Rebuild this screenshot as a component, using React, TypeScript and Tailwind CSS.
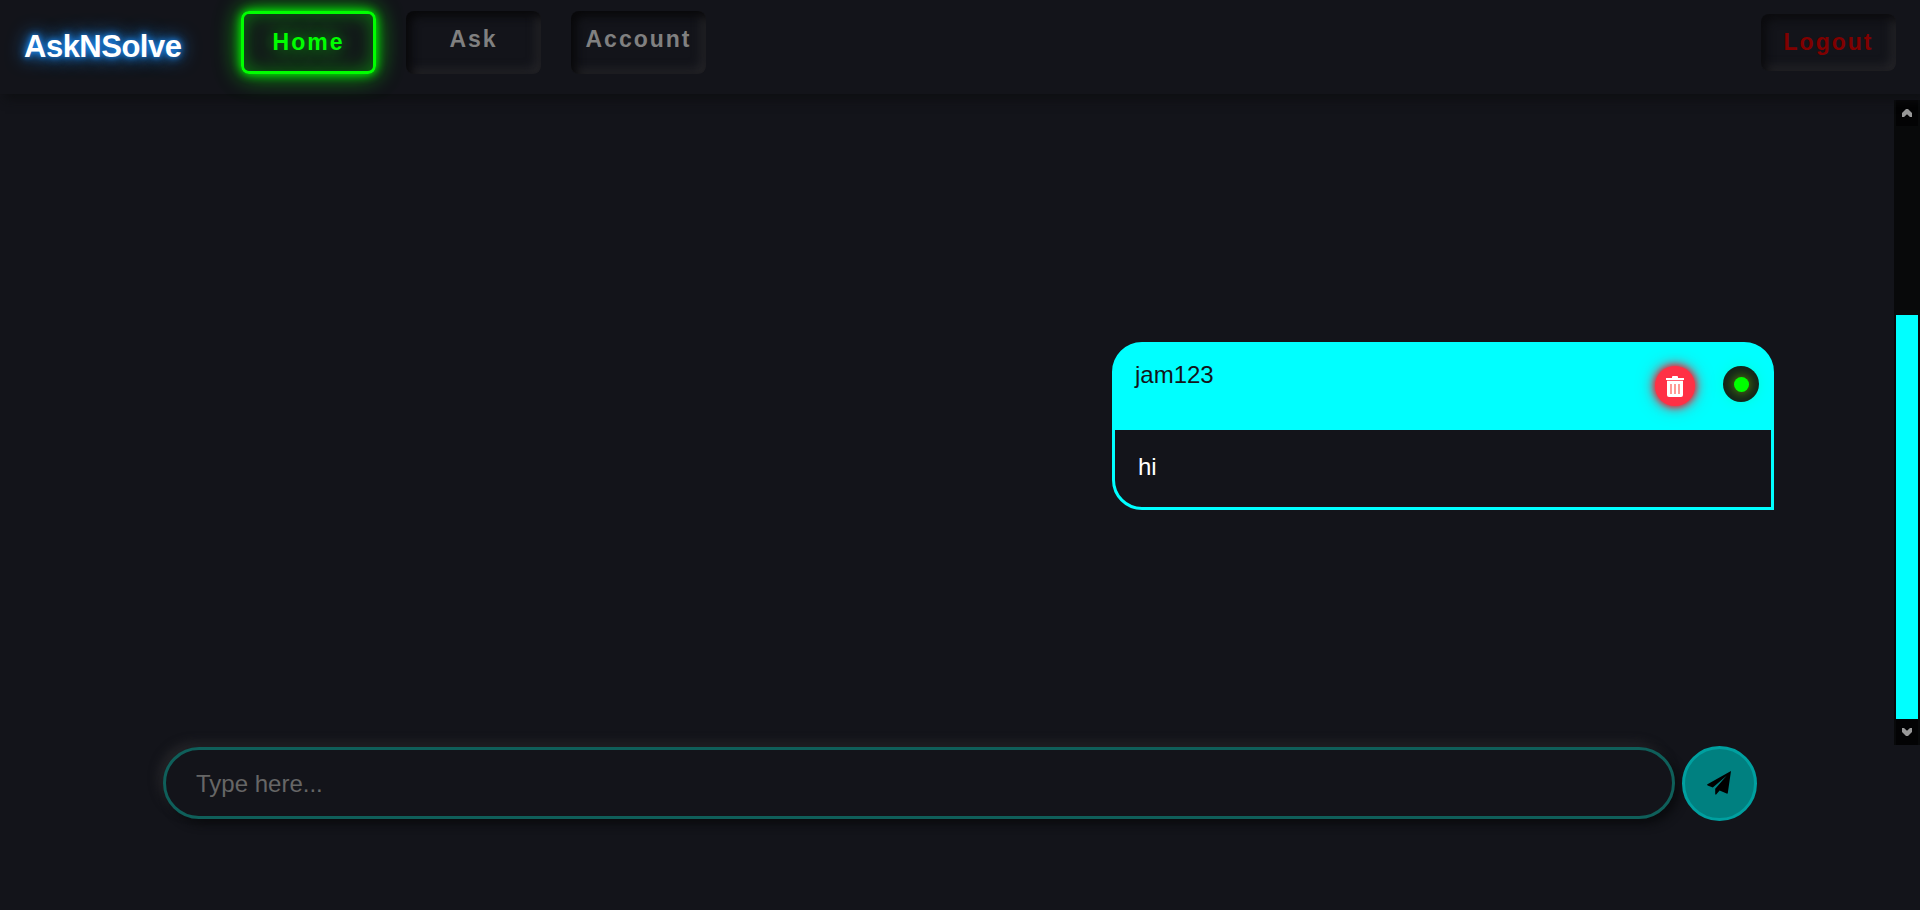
import React from "react";

function NavButton({ label, active = false }: { label: string; active?: boolean }) {
  return (
    <a
      className={
        active
          ? "flex h-[63px] w-[135px] justify-center rounded-lg border-3 border-[#00ff00] pt-[14px] text-[#00ff00] shadow-[0_0_30px_#00ff0044,0_0_22px_#00ff0099,0_0_10px_#00ff00,inset_0_0_20px_#00ff0066] [text-shadow:0_0_20px_#00ff00]"
          : "flex h-[63px] w-[135px] justify-center rounded-lg pt-[14px] text-[#808080] shadow-[inset_5px_5px_10px_#08080a,inset_-5px_-5px_10px_#232327]"
      }
    >
      {label}
    </a>
  );
}

function Trash() {
  return (
    <svg viewBox="0 0 18 21" className="h-[21px] w-[18px]">
      <path d="M0 2h6V1q0-1 1-1h4q1 0 1 1v1h6v2H0z" fill="#fff" />
      <path d="M1 4.8h16V19q0 2-2 2H3q-2 0-2-2z" fill="#fff" />
      <path d="M5 8v10M9 8v10M13 8v10" stroke="#ff5a50" strokeWidth="1.2" />
    </svg>
  );
}

function Plane() {
  return (
    <svg viewBox="0 0 24 24" className="mr-px mb-px h-6 w-6">
      <path d="M24 0 0 13.4l.6 1L5.8 16.6 19.6 4.8 8.2 17.8V23.4l1 .2 3.4-4 7 3q1 .4 1.2-.6z" fill="#000" />
    </svg>
  );
}

export default function App() {
  return (
    <div className="flex h-[910px] w-full flex-col overflow-hidden bg-[#13141a] font-['Liberation_Sans',Arial,sans-serif]">
      <nav className="relative flex h-[94px] shrink-0 items-start pr-6 pl-6 shadow-[5px_5px_10px_#0e0f12]">
        <div className="w-[217px] pt-[25px] text-[31px] leading-[44px] font-bold tracking-[-0.5px] text-white [text-shadow:0_0_20px_#1e90ff,0_0_10px_#1e90ff,0_0_5px_#1e90ff99]">
          AskNSolve
        </div>
        <div className="flex gap-[30px] pt-[11px] text-[23px] leading-7 font-bold tracking-[2px]">
          <NavButton label="Home" active />
          <NavButton label="Ask" />
          <NavButton label="Account" />
        </div>
        <button className="mt-[14px] ml-auto h-[57px] w-[135px] rounded-lg pb-px text-[23px] leading-7 font-bold tracking-[2px] text-[#800000] shadow-[inset_5px_5px_10px_#0b0b0e,inset_-5px_-5px_10px_#232327]">
          Logout
        </button>
      </nav>

      <main className="mt-[6px] flex h-[645px] shrink-0">
        <div className="flex flex-1 justify-end pt-[242px] pr-[120px]">
          <article className="h-[168px] w-[662px] rounded-[30px] rounded-br-none border-3 border-[#00ffff] bg-[linear-gradient(#00ffff_85px,#13141a_85px)] text-[24px] leading-7">
            <header className="flex h-[85px] pt-[16px] pl-[20px] text-[#13141a]">
              <span>jam123</span>
              <div className="mt-[5px] mr-[17px] ml-auto flex size-10 items-center justify-center rounded-full bg-[#ff3045] shadow-[0_0_20px_#ff304566,0_0_12px_#ff2030,0_0_6px_#c03040]">
                <Trash />
              </div>
              <div className="mt-[5px] mr-3 ml-[11px] flex size-9 items-center justify-center rounded-full bg-[#13241a] shadow-[0_0_15px_#00ff0020]">
                <i className="size-[15px] rounded-full bg-[#00ff00] shadow-[0_0_12px_#66aa00]" />
              </div>
            </header>
            <p className="pt-[23px] pl-[23px] text-white">hi</p>
          </article>
        </div>
        <aside className="flex w-[26px] flex-col items-center bg-[#08090a]">
          <div className="flex h-[26px] w-[22px] items-center justify-center bg-[#030304]">
            <svg viewBox="0 0 10 8" className="h-2 w-2.5"><path d="M0 8V4l4-4h2l4 4v4H8L5 5.3 2 8z" fill="#999" /></svg>
          </div>
          <div className="mt-[189px] h-[404px] w-[22px] bg-[#00ffff]" />
          <div className="flex h-[26px] w-[22px] items-center justify-center bg-[#030304]">
            <svg viewBox="0 0 10 8" className="h-2 w-2.5"><path d="M0 0v4l4 4h2l4-4V0H8L5 2.7 2 0z" fill="#999" /></svg>
          </div>
        </aside>
      </main>

      <form className="mt-px flex items-start gap-[7px] pl-[163px]">
        <input
          placeholder="Type here..."
          className="mt-px h-[72px] w-[1512px] rounded-full border-3 border-[#0f5f5a] bg-[#13141a] px-[30px] pt-[2px] text-[24px] shadow-[5px_5px_10px_#0a0b0e,-5px_-5px_10px_#232327] placeholder:text-[#666]"
        />
        <button className="flex size-[75px] items-center justify-center rounded-full border-3 border-[#00a0a0] bg-[#008080]">
          <Plane />
        </button>
      </form>
    </div>
  );
}
